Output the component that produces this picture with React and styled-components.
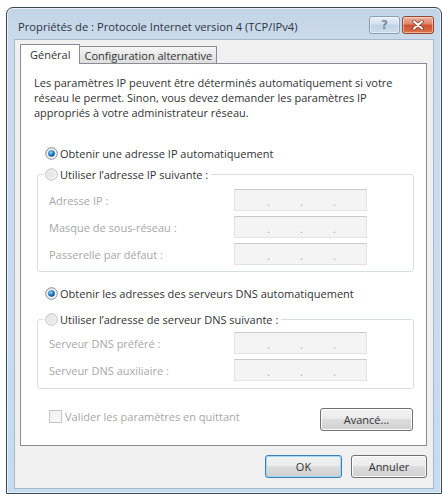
import React from "react";
import styled, { createGlobalStyle } from "styled-components";

const GlobalStyle = createGlobalStyle`
  * { box-sizing: border-box; }
  body {
    margin: 0;
    background: #ffffff;
    font-family: "Open Sans", "Noto Sans", sans-serif;
    font-size: 11px;
    color: #333333;
  }
`;

// fenêtre (cadre Aero basique)
const Window = styled.div`
  margin: 7px 0 0 6px;
  width: 436px;
  height: 487px;
  border: 1px solid #3a4756;
  border-radius: 7px 7px 0 0;
  background: linear-gradient(#c3d4e7, #cddcec 40px, #c6dbf1);
  box-shadow: inset 0 0 0 1px rgba(255, 255, 255, 0.6);
  display: flex;
  flex-direction: column;
`;

const TitleBar = styled.div`
  height: 31px;
  display: flex;
  align-items: flex-start;
  padding: 8px 7px 0 11px;
`;

const Title = styled.div`
  flex: 1;
  margin-top: 3px;
  line-height: 15px;
  font-size: 11.2px;
  color: #2a3543;
  white-space: nowrap;
`;

const CaptionButtons = styled.div`
  display: flex;
  gap: 2px;
`;

const CaptionButton = styled.div`
  width: ${(p) => p.$w}px;
  height: 18px;
  border-radius: 3px;
  display: flex;
  align-items: center;
  justify-content: center;
  border: 1px solid ${(p) => (p.$close ? "#97452f" : "#8b9db2")};
  background: ${(p) =>
    p.$close
      ? "linear-gradient(#edb2a0, #df8566 45%, #cc4f33 50%, #dc7347)"
      : "linear-gradient(#e8eff7, #d3e0ee 45%, #bfd1e4 50%, #cfdeed)"};
  box-shadow: inset 0 0 0 1px rgba(255, 255, 255, 0.45);
  color: #7a8ca2;
  font-family: "DejaVu Sans", sans-serif;
  font-weight: bold;
  font-size: 12px;
  line-height: 1;
`;

const Client = styled.div`
  margin: 0 7px;
  height: 450px;
  background: #f0f0f0;
  border: 1px solid #a6b8cb;
  padding: 4px 6px 0 5px;
`;

const TabRow = styled.div`
  display: flex;
  align-items: flex-end;
  height: 19px;
`;

const Tab = styled.div`
  position: relative;
  z-index: ${(p) => (p.$active ? 1 : 0)};
  height: ${(p) => (p.$active ? 20 : 17)}px;
  margin-bottom: ${(p) => (p.$active ? -1 : 0)}px;
  margin-left: ${(p) => (p.$active ? 0 : -1)}px;
  padding: 0 ${(p) => (p.$active ? 9 : 4)}px;
  border: 1px solid #898c95;
  border-bottom: none;
  background: ${(p) =>
    p.$active ? "#ffffff" : "linear-gradient(#f6f6f6, #e8e8e8 50%, #dedede)"};
  display: flex;
  align-items: center;
  white-space: nowrap;
  line-height: 15px;
`;

const Panel = styled.div`
  height: 383px;
  background: #ffffff;
  border: 1px solid #898c95;
  padding: 11px 12px 0 13px;
  display: flex;
  flex-direction: column;
`;

const Intro = styled.p`
  margin: 0;
  line-height: 15px;
`;

const OptionRow = styled.div`
  display: flex;
  align-items: center;
  gap: 2px;
  height: 16px;
  margin: ${(p) => p.$mt}px 0 0 11px;
  white-space: nowrap;
`;

const Group = styled.fieldset`
  margin: ${(p) => p.$mt}px 0 0 3px;
  padding: ${(p) => p.$pt}px 0 ${(p) => p.$pb}px 6px;
  border: 1px solid #d5dfe5;
  border-radius: 3px;
  min-width: 0;
`;

const Legend = styled.legend`
  padding: 0 3px 0 1px;
`;

const LegendInner = styled.div`
  display: flex;
  align-items: center;
  gap: 2px;
  height: 16px;
  white-space: nowrap;
  color: #333333;
`;

const Fields = styled.div`
  display: flex;
  flex-direction: column;
  gap: 5px;
`;

const FieldRow = styled.div`
  display: flex;
  align-items: center;
  height: 22px;
`;

const FieldLabel = styled.div`
  width: 185px;
  margin-left: 5px;
  color: #a8a8a8;
`;

const AddressBox = styled.div`
  width: 133px;
  height: 22px;
  background: #f4f4f4;
  border: 1px solid #e2e3e6;
  border-top-color: #cacaca;
  display: flex;
  align-items: center;
  padding: 3px 0 0 32px;
  color: #a8a8a8;
`;

const Dot = styled.span`
  width: 33px;
`;

const Footer = styled.div`
  display: flex;
  align-items: flex-start;
  justify-content: space-between;
  margin: 19px 1px 0 15px;
  height: 23px;
`;

const CheckRow = styled.div`
  display: flex;
  align-items: center;
  gap: 3px;
  height: 15px;
  margin-top: 1px;
  color: #a8a8a8;
`;

const CheckBox = styled.div`
  width: 13px;
  height: 13px;
  border: 1px solid #c6c6c6;
  background: linear-gradient(135deg, #f0f0f0, #fafafa);
`;

const Button = styled.button`
  width: ${(p) => p.$w}px;
  height: 23px;
  padding: 0;
  border: 1px solid ${(p) => (p.$default ? "#3c7fb1" : "#707070")};
  border-radius: 3px;
  background: linear-gradient(#f2f2f2, #ebebeb 49%, #dddddd 50%, #cfcfcf);
  box-shadow: inset 0 0 0 1px ${(p) => (p.$default ? "#9ddcf5" : "#fcfcfc")};
  font-family: inherit;
  font-size: 11px;
  color: #333333;
`;

const ButtonRow = styled.div`
  display: flex;
  justify-content: flex-end;
  gap: 9px;
  margin-top: 9px;
`;

function Radio({ checked, disabled }) {
  return (
    <svg width="13" height="13" viewBox="0 0 13 13">
      <defs>
        <linearGradient id="ringOn" x1="0" y1="0" x2="1" y2="1">
          <stop offset="0" stopColor="#dfe2e6" />
          <stop offset="1" stopColor="#ffffff" />
        </linearGradient>
        <linearGradient id="ringOff" x1="0" y1="0" x2="1" y2="1">
          <stop offset="0" stopColor="#e4e4e4" />
          <stop offset="1" stopColor="#f8f8f8" />
        </linearGradient>
        <radialGradient id="dotOn" cx="0.4" cy="0.35" r="0.7">
          <stop offset="0" stopColor="#a7dcfb" />
          <stop offset="0.45" stopColor="#2a8ad4" />
          <stop offset="1" stopColor="#0d3f7a" />
        </radialGradient>
      </defs>
      <circle
        cx="6.5"
        cy="6.5"
        r="5.8"
        fill={disabled ? "url(#ringOff)" : "url(#ringOn)"}
        stroke={disabled ? "#c4c4c4" : "#8b8d90"}
        strokeWidth="1"
      />
      {checked ? (
        <circle cx="6.5" cy="6.5" r="3.3" fill="url(#dotOn)" />
      ) : (
        <circle cx="6.5" cy="6.5" r="3.6" fill={disabled ? "#e9e9e9" : "#e4e6e9"} />
      )}
    </svg>
  );
}

function CloseGlyph() {
  return (
    <svg width="12" height="10" viewBox="0 0 12 10">
      <path
        d="M2 1.5 L10 8.5 M10 1.5 L2 8.5"
        stroke="#7a3020"
        strokeWidth="3.6"
        strokeLinecap="round"
      />
      <path
        d="M2 1.5 L10 8.5 M10 1.5 L2 8.5"
        stroke="#ffffff"
        strokeWidth="2.2"
        strokeLinecap="round"
      />
    </svg>
  );
}

function AddressField() {
  return (
    <AddressBox>
      <Dot>.</Dot>
      <Dot>.</Dot>
      <Dot>.</Dot>
    </AddressBox>
  );
}

const ipFields = ["Adresse IP :", "Masque de sous-réseau :", "Passerelle par défaut :"];
const dnsFields = ["Serveur DNS préféré :", "Serveur DNS auxiliaire :"];

function App() {
  return (
    <>
      <GlobalStyle />
      <Window>
        <TitleBar>
          <Title>Propriétés de : Protocole Internet version 4 (TCP/IPv4)</Title>
          <CaptionButtons>
            <CaptionButton $w={31}>?</CaptionButton>
            <CaptionButton $w={32} $close>
              <CloseGlyph />
            </CaptionButton>
          </CaptionButtons>
        </TitleBar>
        <Client>
          <TabRow>
            <Tab $active>Général</Tab>
            <Tab>Configuration alternative</Tab>
          </TabRow>
          <Panel>
            <Intro>
              Les paramètres IP peuvent être déterminés automatiquement si votre
              <br />
              réseau le permet. Sinon, vous devez demander les paramètres IP
              <br />
              appropriés à votre administrateur réseau.
            </Intro>

            <OptionRow $mt={25}>
              <Radio checked />
              Obtenir une adresse IP automatiquement
            </OptionRow>
            <Group $mt={5} $pt={7} $pb={6}>
              <Legend>
                <LegendInner>
                  <Radio disabled />
                  Utiliser l’adresse IP suivante :
                </LegendInner>
              </Legend>
              <Fields>
                {ipFields.map((label) => (
                  <FieldRow key={label}>
                    <FieldLabel>{label}</FieldLabel>
                    <AddressField />
                  </FieldRow>
                ))}
              </Fields>
            </Group>

            <OptionRow $mt={13}>
              <Radio checked />
              Obtenir les adresses des serveurs DNS automatiquement
            </OptionRow>
            <Group $mt={10} $pt={5} $pb={7}>
              <Legend>
                <LegendInner>
                  <Radio disabled />
                  Utiliser l’adresse de serveur DNS suivante :
                </LegendInner>
              </Legend>
              <Fields>
                {dnsFields.map((label) => (
                  <FieldRow key={label}>
                    <FieldLabel>{label}</FieldLabel>
                    <AddressField />
                  </FieldRow>
                ))}
              </Fields>
            </Group>

            <Footer>
              <CheckRow>
                <CheckBox />
                Valider les paramètres en quittant
              </CheckRow>
              <Button $w={93}>Avancé...</Button>
            </Footer>
          </Panel>
          <ButtonRow>
            <Button $w={77} $default>
              OK
            </Button>
            <Button $w={76}>Annuler</Button>
          </ButtonRow>
        </Client>
      </Window>
    </>
  );
}

export default App;
